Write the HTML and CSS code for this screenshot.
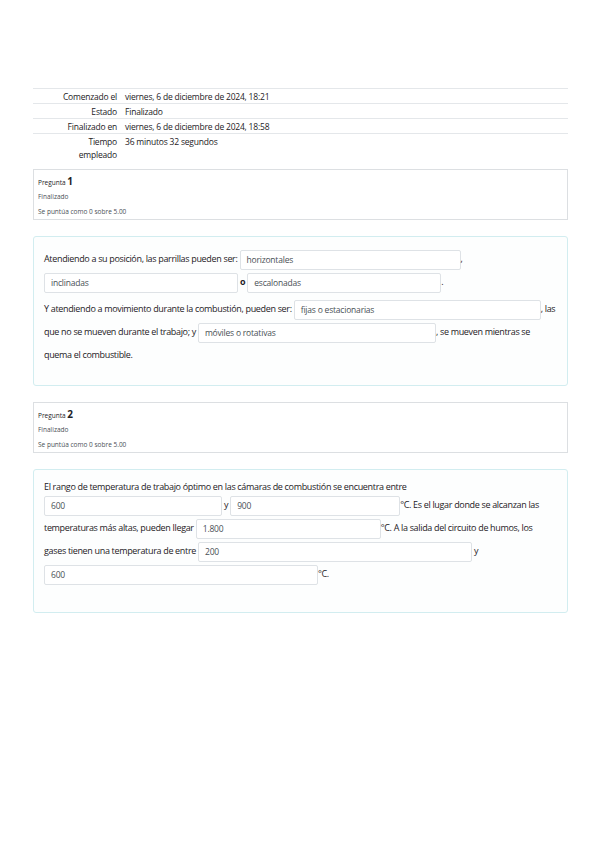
FILE: index.html
```html
<!DOCTYPE html>
<html lang="es">
<head>
<meta charset="utf-8">
<title>Revisión del intento</title>
<link rel="stylesheet" href="styles.css">
</head>
<body>
<div class="page">
  <table class="summary">
    <tbody>
      <tr><th>Comenzado el</th><td>viernes, 6 de diciembre de 2024, 18:21</td></tr>
      <tr><th>Estado</th><td>Finalizado</td></tr>
      <tr><th>Finalizado en</th><td>viernes, 6 de diciembre de 2024, 18:58</td></tr>
      <tr><th>Tiempo empleado</th><td>36 minutos 32 segundos</td></tr>
    </tbody>
  </table>

  <div class="info">
    <h3 class="info-title">Pregunta <span class="qno">1</span></h3>
    <div class="state">Finalizado</div>
    <div class="grade">Se puntúa como 0 sobre 5.00</div>
  </div>

  <div class="content">
    <div class="para">
      <div class="ln">Atendiendo a su posición, las parrillas pueden ser: <span class="answer w221">horizontales</span>,</div>
      <div class="ln"><span class="answer w194">inclinadas</span> <b class="conj">o</b> <span class="answer w194">escalonadas</span>.</div>
    </div>
    <div class="para">
      <div class="ln">Y atendiendo a movimiento durante la combustión, pueden ser: <span class="answer w247">fijas o estacionarias</span>, las</div>
      <div class="ln">que no se mueven durante el trabajo; y <span class="answer w238">móviles o rotativas</span>, se mueven mientras se</div>
      <div class="ln">quema el combustible.</div>
    </div>
  </div>

  <div class="info">
    <h3 class="info-title">Pregunta <span class="qno">2</span></h3>
    <div class="state">Finalizado</div>
    <div class="grade">Se puntúa como 0 sobre 5.00</div>
  </div>

  <div class="content content-q2">
    <div class="para">
      <div class="ln ln-text">El rango de temperatura de trabajo óptimo en las cámaras de combustión se encuentra entre</div>
      <div class="ln"><span class="answer w178">600</span> y <span class="answer w170">900</span>°C. Es el lugar donde se alcanzan las</div>
      <div class="ln">temperaturas más altas, pueden llegar <span class="answer w185">1.800</span>°C. A la salida del circuito de humos, los</div>
      <div class="ln">gases tienen una temperatura de entre <span class="answer w274">200</span> y</div>
      <div class="ln"><span class="answer w274">600</span>°C.</div>
    </div>
  </div>
</div>
</body>
</html>
```
FILE: styles.css
```css
body {
  margin: 0;
  background: #ffffff;
  font-family: "Open Sans", "DejaVu Sans", sans-serif;
  color: #1d2125;
}

.page {
  padding: 88px 31px 0 33px;
}

.summary {
  width: 100%;
  border-collapse: collapse;
  font-size: 8.5px;
  letter-spacing: -0.2px;
  line-height: 13px;
}

.summary tr {
  border-top: 1px solid #e4e7ea;
}

.summary th {
  width: 64px;
  padding: 1px 4px 0 20px;
  text-align: right;
  font-weight: normal;
  vertical-align: top;
}

.summary td {
  padding: 1px 4px 0 4px;
  vertical-align: top;
}

.info {
  margin-top: 8px;
  border: 1px solid #dcdfe2;
  padding: 5px 4px 3px;
}

.content + .info {
  margin-top: 16px;
}

.info-title {
  height: 12px;
  margin: 0 0 5px;
  font-size: 6.5px;
  line-height: 12px;
  font-weight: normal;
}

.qno {
  font-size: 10px;
  line-height: 12px;
  font-weight: 700;
}

.state,
.grade {
  height: 9px;
  font-size: 6.5px;
  line-height: 9px;
  color: #4a5056;
}

.state {
  margin-bottom: 6px;
}

.content {
  margin-top: 16px;
  border: 1px solid #d2edf0;
  border-radius: 3px;
  padding: 10px 10px 19px;
  background: #fdfefe;
  font-size: 9px;
  font-weight: 500;
  letter-spacing: -0.33px;
}

.content-q2 {
  padding-bottom: 27px;
}

.para + .para {
  margin-top: 4px;
}

.ln {
  height: 23px;
  line-height: 23px;
  white-space: nowrap;
}

.ln-text {
  height: 13px;
  line-height: 13px;
}

.conj {
  font-weight: 700;
}

.answer {
  display: inline-block;
  box-sizing: border-box;
  height: 20px;
  line-height: 18px;
  vertical-align: middle;
  padding: 0 6px;
  border: 1px solid #dee2e6;
  border-radius: 2px;
  background: #ffffff;
  color: #4a5056;
  font-size: 8.5px;
  font-weight: normal;
  letter-spacing: -0.2px;
}

.w170 { width: 170px; }
.w178 { width: 178px; }
.w185 { width: 185px; }
.w194 { width: 194px; }
.w221 { width: 221px; }
.w238 { width: 238px; }
.w247 { width: 247px; }
.w274 { width: 274px; }
```
